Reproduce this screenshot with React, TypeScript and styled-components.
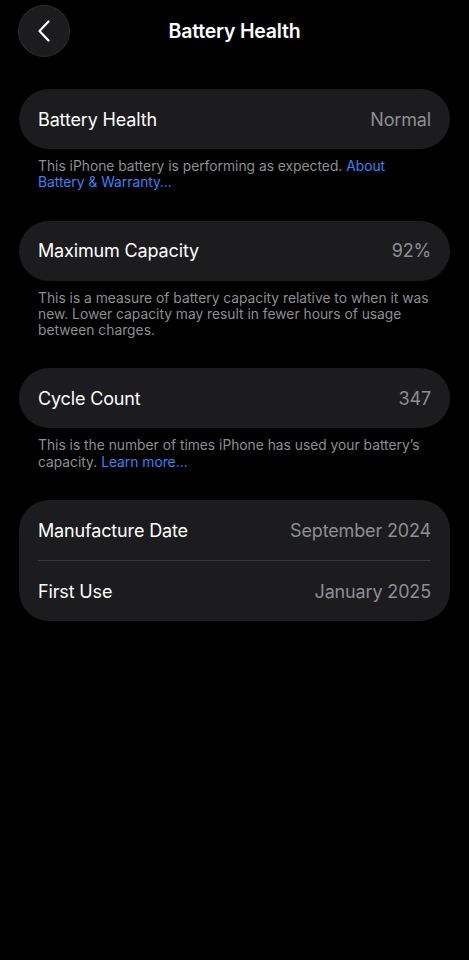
import styled, { createGlobalStyle } from "styled-components";

const GlobalStyle = createGlobalStyle`
  html, body {
    margin: 0;
    padding: 0;
    background: #000;
  }
  body {
    font-family: Inter, "Noto Sans", "Liberation Sans", sans-serif;
    -webkit-font-smoothing: antialiased;
  }
`;

const Page = styled.div`
  width: 469px;
  min-height: 960px;
  background: #000;
  box-sizing: border-box;
  padding: 5px 19px 0;
  display: flex;
  flex-direction: column;
`;

const Header = styled.div`
  position: relative;
  height: 52px;
  display: flex;
  align-items: center;
  justify-content: center;
  margin-bottom: 32px;
`;

const BackButton = styled.button`
  position: absolute;
  left: -1px;
  top: 0;
  width: 52px;
  height: 52px;
  border-radius: 50%;
  background: #1c1c1e;
  border: 1px solid #2c2c2e;
  display: flex;
  align-items: center;
  justify-content: center;
  padding: 0;
  cursor: pointer;
`;

const Title = styled.h1`
  margin: 0;
  color: #fff;
  font-size: 19.5px;
  font-weight: 600;
  letter-spacing: -0.2px;
`;

const Section = styled.div`
  display: flex;
  flex-direction: column;
  margin-bottom: 30px;
`;

const Card = styled.div`
  background: #1c1c1e;
  border-radius: 30px;
  padding: 0 19px;
  display: flex;
  flex-direction: column;
`;

const Row = styled.div<{ $divider?: boolean }>`
  height: 60px;
  display: flex;
  align-items: center;
  justify-content: space-between;
  border-bottom: ${(p) => (p.$divider ? "1px solid #38383a" : "none")};
`;

const Label = styled.span`
  color: #fff;
  font-size: 18px;
  font-weight: 400;
  letter-spacing: -0.15px;
`;

const Value = styled.span`
  color: #8e8e93;
  font-size: 18px;
  letter-spacing: -0.15px;
`;

const Footnote = styled.p`
  margin: 9px 19px 0;
  color: #8e8e93;
  font-size: 13.8px;
  line-height: 16.3px;
  letter-spacing: 0;

  a {
    color: #3b82f6;
    text-decoration: none;
  }
`;

function ChevronLeft() {
  return (
    <svg width="14" height="22" viewBox="0 0 14 22" fill="none">
      <path
        d="M11.5 1.5L2.5 11L11.5 20.5"
        stroke="#fff"
        strokeWidth="2.2"
        strokeLinecap="round"
        strokeLinejoin="round"
      />
    </svg>
  );
}

export default function App() {
  return (
    <>
      <GlobalStyle />
      <Page>
        <Header>
          <BackButton aria-label="Back">
            <ChevronLeft />
          </BackButton>
          <Title>Battery Health</Title>
        </Header>

        <Section>
          <Card>
            <Row>
              <Label>Battery Health</Label>
              <Value>Normal</Value>
            </Row>
          </Card>
          <Footnote>
            This iPhone battery is performing as expected.{" "}
            <a href="#">About Battery &amp; Warranty…</a>
          </Footnote>
        </Section>

        <Section>
          <Card>
            <Row>
              <Label>Maximum Capacity</Label>
              <Value>92%</Value>
            </Row>
          </Card>
          <Footnote>
            This is a measure of battery capacity relative to when it was new.
            Lower capacity may result in fewer hours of usage between charges.
          </Footnote>
        </Section>

        <Section>
          <Card>
            <Row>
              <Label>Cycle Count</Label>
              <Value>347</Value>
            </Row>
          </Card>
          <Footnote>
            This is the number of times iPhone has used your battery’s capacity.{" "}
            <a href="#">Learn more…</a>
          </Footnote>
        </Section>

        <Section>
          <Card>
            <Row $divider>
              <Label>Manufacture Date</Label>
              <Value>September 2024</Value>
            </Row>
            <Row>
              <Label>First Use</Label>
              <Value>January 2025</Value>
            </Row>
          </Card>
        </Section>
      </Page>
    </>
  );
}
